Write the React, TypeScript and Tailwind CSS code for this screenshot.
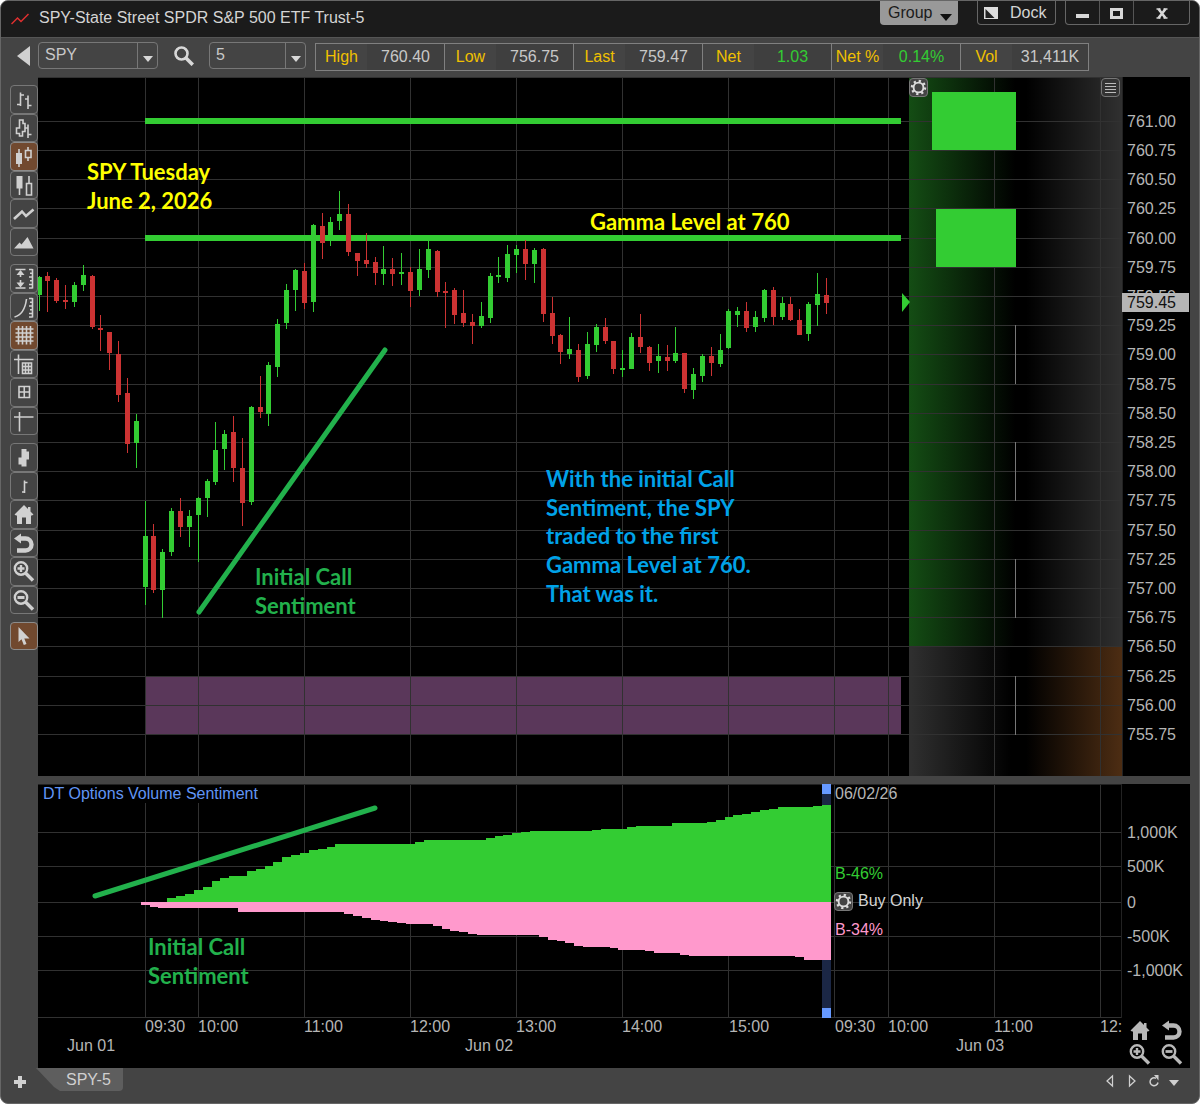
import type { ReactNode } from 'react';

type Candle = ['u' | 'd', number, number, number, number];

// direction, high, body top, body bottom, low
const CANDLES: Candle[] = [
  ['u', 276, 277, 295, 311], ['d', 272, 276, 281, 312], ['d', 278, 280, 301, 303], ['d', 285, 300, 302, 309],
  ['u', 282, 285, 302, 307], ['u', 265, 275, 285, 291], ['d', 275, 276, 327, 329], ['d', 315, 328, 330, 351],
  ['d', 332, 332, 353, 370], ['d', 341, 354, 395, 402], ['d', 378, 393, 444, 453], ['u', 414, 421, 443, 468],
  ['u', 501, 536, 587, 605], ['d', 524, 536, 590, 593], ['u', 549, 552, 590, 618], ['u', 508, 511, 552, 556],
  ['d', 498, 511, 527, 537], ['u', 510, 516, 527, 547], ['u', 497, 498, 515, 562], ['u', 479, 481, 498, 517],
  ['u', 422, 450, 482, 485], ['u', 430, 434, 449, 470], ['d', 416, 432, 468, 482], ['d', 438, 468, 503, 526],
  ['u', 406, 407, 502, 505], ['d', 376, 407, 412, 418], ['u', 362, 365, 414, 426], ['u', 319, 324, 367, 377],
  ['u', 284, 290, 323, 329], ['u', 269, 270, 290, 311], ['d', 263, 271, 303, 309], ['u', 224, 225, 302, 312],
  ['d', 213, 226, 243, 259], ['u', 217, 222, 237, 246], ['u', 191, 214, 221, 230], ['d', 204, 214, 252, 256],
  ['d', 253, 253, 261, 276], ['d', 233, 260, 264, 268], ['d', 257, 262, 273, 285], ['u', 246, 269, 274, 285],
  ['d', 258, 269, 274, 286], ['u', 253, 272, 274, 285], ['d', 267, 272, 291, 307], ['u', 249, 269, 290, 296],
  ['u', 240, 249, 270, 278], ['d', 250, 251, 292, 297], ['d', 282, 291, 293, 328], ['d', 288, 290, 315, 324],
  ['d', 290, 313, 323, 327], ['d', 314, 322, 326, 344], ['u', 302, 316, 326, 328], ['u', 273, 276, 318, 323],
  ['u', 257, 275, 277, 283], ['u', 245, 254, 278, 282], ['u', 245, 249, 255, 273], ['d', 240, 249, 264, 280],
  ['u', 248, 250, 264, 283], ['d', 248, 249, 314, 322], ['d', 297, 313, 336, 344], ['d', 334, 335, 352, 364],
  ['u', 317, 349, 354, 359], ['d', 344, 350, 377, 382], ['u', 332, 344, 376, 379], ['u', 324, 327, 345, 352],
  ['d', 318, 327, 341, 344], ['d', 341, 341, 369, 374], ['u', 350, 368, 370, 377], ['u', 333, 337, 369, 369],
  ['d', 314, 337, 347, 353], ['d', 346, 347, 363, 371], ['u', 344, 356, 361, 373], ['d', 345, 357, 361, 371],
  ['u', 327, 353, 361, 363], ['d', 353, 353, 389, 393], ['u', 368, 374, 390, 399], ['u', 354, 356, 376, 382],
  ['d', 347, 356, 363, 376], ['u', 334, 350, 364, 367], ['u', 309, 311, 348, 349], ['u', 307, 311, 315, 327],
  ['d', 302, 311, 328, 332], ['u', 311, 317, 327, 332], ['u', 289, 290, 318, 322], ['d', 287, 290, 317, 325],
  ['u', 297, 303, 317, 320], ['d', 297, 304, 320, 321], ['d', 309, 320, 335, 335], ['u', 302, 304, 334, 341],
  ['u', 273, 294, 305, 326], ['d', 278, 295, 303, 314],
];

// [number of bars, edge of the bar]
const CALLS = [
  [3, 902], [1, 898], [1, 896], [1, 894], [1, 890], [1, 887], [1, 881], [1, 878], [2, 876], [1, 871], [1, 869],
  [1, 866], [1, 862], [1, 857], [1, 855], [1, 853], [1, 850], [1, 849], [1, 847], [9, 844], [1, 842], [7, 840],
  [1, 838], [1, 836], [1, 835], [1, 833], [1, 832], [7, 831], [1, 830], [3, 829], [1, 827], [4, 826], [4, 823],
  [1, 822], [1, 820], [1, 817], [1, 815], [1, 814], [1, 812], [1, 810], [1, 809], [4, 807], [1, 806], [1, 805],
];
const PUTS = [
  [1, 905], [1, 907], [9, 908], [12, 912], [1, 914], [1, 916], [1, 918], [1, 920], [1, 921], [1, 922], [1, 923],
  [3, 924], [1, 926], [1, 929], [1, 931], [1, 932], [1, 934], [7, 935], [1, 937], [1, 940], [1, 941], [1, 943],
  [1, 946], [3, 947], [1, 948], [3, 950], [1, 951], [3, 953], [1, 955], [12, 956], [1, 957], [3, 960],
];

const STEP = 8.846;
const HOURS = [145, 198, 304, 410, 516, 622, 728, 834, 888, 994, 1100];
const PRICES = Array.from({ length: 22 }, (_, i) => 761 - i * 0.25);
const priceY = (p: number) => Math.round(120.8 + (761 - p) * 116.8);

const TIMES: [number, string][] = [
  [145, '09:30'], [198, '10:00'], [304, '11:00'], [410, '12:00'], [516, '13:00'], [622, '14:00'], [729, '15:00'],
  [835, '09:30'], [888, '10:00'], [994, '11:00'], [1100, '12:'],
];
const DAYS: [number, string][] = [[67, 'Jun 01'], [465, 'Jun 02'], [956, 'Jun 03']];
const VOLUMES: [number, string][] = [[832, '1,000K'], [866, '500K'], [902, '0'], [936, '-500K'], [970, '-1,000K']];

const QUOTES = [
  { label: 'High', value: '760.40', color: 'text-[#c8c8c8]' },
  { label: 'Low', value: '756.75', color: 'text-[#c8c8c8]' },
  { label: 'Last', value: '759.47', color: 'text-[#c8c8c8]' },
  { label: 'Net', value: '1.03', color: 'text-[#33cc33]' },
  { label: 'Net %', value: '0.14%', color: 'text-[#33cc33]' },
  { label: 'Vol', value: '31,411K', color: 'text-[#c8c8c8]' },
];

function areaPath(runs: number[][]) {
  let x = 140.7;
  let d = `M${x} 902`;
  runs.forEach(([count, y]) => {
    d += `V${y}`;
    x += count * STEP;
    d += `H${x.toFixed(1)}`;
  });
  return d + 'V902Z';
}

const fill = { fill: 'currentColor', stroke: 'none' };

const HomeShape = (
  <path {...fill} d="M14 5 4.5 14.5 6 15.5H7V24H12V17.500H16V24H21V15.500H22L23.500 14.500 20.500 11.500V7H18V9Z" />
);
const UndoShape = (
  <>
    <path d="M9 9.500H15.500A6 6 0 0 1 15.500 21.500H7" strokeWidth="4.400" />
    <path {...fill} d="M4 9.500 11 4.500V14.500Z" />
  </>
);
const ZoomInShape = (
  <>
    <circle cx="11" cy="11.500" r="6.200" strokeWidth="2.400" />
    <path d="M7.500 11.500H14.500M11 8V15" strokeWidth="2.400" />
    <path d="M15.500 16 23 23.500" strokeWidth="3.400" />
  </>
);
const ZoomOutShape = (
  <>
    <circle cx="11" cy="11.500" r="6.200" strokeWidth="2.400" />
    <path d="M7.500 11.500H14.500" strokeWidth="2.800" />
    <path d="M15.500 16 23 23.500" strokeWidth="3.400" />
  </>
);
const Ruler = <path d="M22.500 5V24.500M19 5.500H22.500M20 9.300H22.500M19 13H22.500M20 16.700H22.500M19 20.500H22.500M19 24H22.500" />;

type Tool = { name: string; icon: ReactNode; active?: boolean };

const TOOL_GROUPS: Tool[][] = [
  [
    { name: 'OHLC bars', icon: <path d="M10.500 7.500V21M7 19.500H10.500M10.500 10H14M18 10.500V24M15 14H18M18 20.500H21.500" /> },
    {
      name: 'HLC bars',
      icon: <path d="M9.500 6H13V9.500H15V17.500H12.500V22H9.500V19.500H6.500V14H9.500ZM18 10.500V24M15 14H18M18 20.500H21.500" />,
    },
    {
      name: 'Candlesticks',
      active: true,
      icon: (
        <>
          <path {...fill} d="M6 11H12V22H6Z" />
          <path d="M9 7V25M18 5V8.500M18 15.500V19M15.500 8.500H21V15.500H15.500Z" />
        </>
      ),
    },
    {
      name: 'Hollow bars',
      icon: (
        <>
          <path {...fill} d="M6.500 5H12.500V17.500H6.500Z" />
          <path d="M9.500 17V24M19 5V12.500M16.500 12.500H21.500V24H16.500Z" />
        </>
      ),
    },
    { name: 'Line', icon: <path d="M4 20 12 12.500 16 17 23.500 10.500" strokeWidth="2.600" /> },
    { name: 'Area', icon: <path {...fill} d="M4 20.500 9.500 14.500 11.500 16.500 17.500 9 23.500 20.500Z" /> },
  ],
  [
    {
      name: 'Fit height',
      icon: (
        <>
          <path d="M5.500 5.500H15.500M5.500 24H15.500M10.500 8V13M10.500 16V21" />
          <path {...fill} d="M10.500 6 14.500 11H6.500ZM10.500 23.500 14.500 18.500H6.500Z" />
          {Ruler}
        </>
      ),
    },
    { name: 'Log scale', icon: <><path d="M4.500 24Q14.500 21.500 16.500 6" />{Ruler}</> },
    {
      name: 'Grid',
      active: true,
      icon: <path d="M8.500 5V23.500M12.500 5V23.500M16.500 5V23.500M20.500 5V23.500M5.500 8H23.500M5.500 12H23.500M5.500 16H23.500M5.500 20H23.500" />,
    },
    {
      name: 'Data table',
      icon: <path d="M8.500 4.500V24M4 9.500H23.500M12.500 13H21.500V23.500H12.500ZM12.500 16.500H21.500M12.500 20H21.500M15.500 13V23.500M18.500 13V23.500" />,
    },
    { name: 'Table', icon: <path d="M9 8.500H19.500V19.500H9ZM9 14H19.500M14.250 8.500V19.500" /> },
    { name: 'Crosshair', icon: <path d="M9.500 5V24.500M4 10H23.500" /> },
  ],
  [
    { name: 'Wide bars', icon: <path {...fill} d="M11.500 6H16.500V8.500H19V16.500H16.500V23.500H11.500V21.500H8.500V14.500H11.500Z" /> },
    { name: 'Narrow bars', icon: <path d="M14.500 8.500V21M12 20H14.500M14.500 10.500H17.500" /> },
    { name: 'Home', icon: HomeShape },
    { name: 'Undo', icon: UndoShape },
    { name: 'Zoom in', icon: ZoomInShape },
    { name: 'Zoom out', icon: ZoomOutShape },
  ],
];

function Icon({ children, className = 'size-7' }: { children: ReactNode; className?: string }) {
  return (
    <svg viewBox="0 0 28 28" className={className} fill="none" stroke="currentColor" strokeWidth="1.6" aria-hidden="true">
      {children}
    </svg>
  );
}

function ToolButton({ name, icon, active }: Tool) {
  return (
    <button
      type="button"
      aria-label={name}
      aria-pressed={!!active}
      className={`flex min-h-0 w-7 flex-1 items-center justify-center overflow-hidden rounded border text-[#d0d0d0] ${
        active ? 'border-[#8c8c8c] bg-[#71492f]' : 'border-[#777] bg-[#444]'
      }`}
    >
      <Icon className="size-7 shrink-0">{icon}</Icon>
    </button>
  );
}

function GearButton({ label }: { label: string }) {
  return (
    <button type="button" aria-label={label} className="flex size-[19px] items-center justify-center rounded border border-[#777] bg-[#444]">
      <svg viewBox="0 0 18 18" className="size-[17px]" aria-hidden="true">
        <circle cx="9" cy="9" r="7" fill="none" stroke="#ddd" strokeWidth="2.400" strokeDasharray="2.400 3.098" />
        <circle cx="9" cy="9" r="5.200" fill="none" stroke="#ddd" strokeWidth="2" />
      </svg>
    </button>
  );
}

function Picker({ label, value, className }: { label: string; value: string; className: string }) {
  return (
    <div className={`relative h-[27px] rounded border border-[#777] ${className}`}>
      <select
        aria-label={label}
        defaultValue={value}
        className="block h-6 w-full appearance-none bg-transparent pl-1.5 text-base leading-6 text-[#c8c8c8] outline-none"
      >
        <option>{value}</option>
      </select>
      <span className="pointer-events-none absolute inset-y-0 right-0 flex w-5 items-center justify-center border-l border-[#777] pt-1.5">
        <svg viewBox="0 0 10 6" className="h-1.5 w-2.5" aria-hidden="true">
          <path d="M0 0H10L5 6Z" fill="#d8d8d8" />
        </svg>
      </span>
    </div>
  );
}

function TitleBar() {
  return (
    <header className="flex h-9 items-start bg-[#1b1b1b] pr-[9px] pl-2.5">
      <svg viewBox="0 0 18 12" className="mt-3 h-3 w-[18px]" fill="none" stroke="#e03030" strokeWidth="1.5" aria-hidden="true">
        <path d="M.5 11 6.500 5 10 8.500 17.500 1" />
      </svg>
      <h1 className="mt-[5px] ml-2.5 flex-1 truncate text-base leading-6 text-[#d4d4d4]">SPY-State Street SPDR S&amp;P 500 ETF Trust-5</h1>
      <button type="button" className="flex h-6 w-[78px] items-center justify-between rounded-b bg-[#999] pr-1.5 pl-2 text-base text-[#1b1b1b]">
        Group
        <svg viewBox="0 0 12 7" className="mt-2 h-[7px] w-3" aria-hidden="true">
          <path d="M0 0H12L6 7Z" fill="#111" />
        </svg>
      </button>
      <button type="button" className="ml-[19px] flex h-6 w-[79px] items-center gap-3 rounded-b border border-t-0 border-[#666] pl-1.5 text-base text-[#d4d4d4]">
        <svg viewBox="0 0 14 12" className="h-3 w-3.5" aria-hidden="true">
          <path d="M0 0H14V12H0Z" fill="#ddd" />
          <path d="M1.500 2V11H10.500Z" fill="#222" />
        </svg>
        Dock
      </button>
      <div className="ml-[9px] flex h-6 w-[125px] divide-x divide-[#555] rounded-b border border-t-0 border-[#666] text-[#d8d8d8]">
        <button type="button" aria-label="Minimize" className="flex w-[34px] items-center justify-center pt-1.5">
          <span className="h-1 w-[13px] bg-[#d8d8d8]" />
        </button>
        <button type="button" aria-label="Maximize" className="flex w-[34px] items-center justify-center pt-0.5">
          <span className="h-[11px] w-[13px] border-3 border-[#d8d8d8]" />
        </button>
        <button type="button" aria-label="Close" className="flex flex-1 items-center justify-center pt-0.5">
          <svg viewBox="0 0 12 11" className="h-[11px] w-3" fill="none" stroke="currentColor" aria-hidden="true">
            <path d="M2.500 1 9.500 10M9.500 1 2.500 10" strokeWidth="2.600" />
            <path d="M.5 1H4.500M7.500 1H11.500M.5 10H4.500M7.500 10H11.500" strokeWidth="1.600" />
          </svg>
        </button>
      </div>
    </header>
  );
}

function Toolbar() {
  return (
    <div className="flex h-10 items-start border-t border-[#555] pt-1 pl-4">
      <button type="button" aria-label="Back" className="mt-1 h-5 w-[13px]">
        <svg viewBox="0 0 13 20" className="h-5 w-[13px]" aria-hidden="true">
          <path d="M13 0V20L0 10Z" fill="#d0d0d0" />
        </svg>
      </button>
      <Picker label="Symbol" value="SPY" className="ml-2 w-[120px]" />
      <button type="button" aria-label="Search" className="mt-1 ml-4 text-[#d8d8d8]">
        <svg viewBox="0 0 20 20" className="size-5" fill="none" stroke="currentColor" aria-hidden="true">
          <circle cx="7.500" cy="7.500" r="6" strokeWidth="2.600" />
          <path d="M12 12 18.800 18.800" strokeWidth="3.600" />
        </svg>
      </button>
      <Picker label="Interval" value="5" className="ml-[15px] w-[97px]" />
      <dl className="mt-px ml-[9px] flex h-7 divide-x divide-[#808080] border border-[#808080]">
        {QUOTES.map((q) => (
          <div key={q.label} className="flex w-[129px] text-base leading-[26px] last:w-[127px]">
            <dt className="w-[51px] text-center whitespace-nowrap text-[#f0c000]">{q.label}</dt>
            <dd className={`flex-1 bg-[#3f3f3f] text-center ${q.color}`}>{q.value}</dd>
          </div>
        ))}
      </dl>
    </div>
  );
}

function Note({ x, y, lines, color }: { x: number; y: number; lines: string[]; color: string }) {
  return (
    <text fill={color} className="font-['Lato',sans-serif] text-[22px] font-bold">
      {lines.map((line, i) => (
        <tspan key={line} x={x} y={Math.round(y + i * 28.7)}>
          {line}
        </tspan>
      ))}
    </text>
  );
}

function PriceChart() {
  return (
    <svg viewBox="38 77 1152 699" className="block h-auto w-full bg-black" role="img" aria-label="SPY 5 minute candles">
      <defs>
        <linearGradient id="callSide">
          <stop offset="0" stopColor="#144d14" />
          <stop offset="0.5" stopColor="#000" />
          <stop offset="0.55" stopColor="#000" />
          <stop offset="1" stopColor="#303030" />
        </linearGradient>
        <linearGradient id="putSide">
          <stop offset="0" stopColor="#303030" />
          <stop offset="0.48" stopColor="#000" />
          <stop offset="0.55" stopColor="#000" />
          <stop offset="1" stopColor="#4d2d13" />
        </linearGradient>
      </defs>
      <g shapeRendering="crispEdges">
        <rect x="909" y="77" width="213" height="570" fill="url(#callSide)" />
        <rect x="909" y="647" width="213" height="129" fill="url(#putSide)" />
        <rect x="145" y="676" width="756" height="59" fill="#5a375a" />
        {PRICES.map((p) => (
          <rect key={p} x="38" y={priceY(p)} width="1084" height="1" fill="#313131" />
        ))}
        {HOURS.map((x) => (
          <rect key={x} x={x} y="77" width="1" height="699" fill="#313131" />
        ))}
        <rect x="38" y="77" width="1084" height="1" fill="#313131" />
        <rect x="1122" y="77" width="1" height="699" fill="#222" />
        {[325, 442, 559, 676].map((y) => (
          <rect key={y} x="1015" y={y} width="1" height="59" fill="#777" />
        ))}
        <g fill="#33cc33">
          <rect x="932" y="92" width="84" height="58" />
          <rect x="936" y="209" width="80" height="58" />
          <rect x="145" y="118" width="756" height="6" />
          <rect x="145" y="235" width="756" height="6" />
        </g>
        {CANDLES.map(([dir, high, top, bottom, low], i) => {
          const x = Math.round(38.5 + i * STEP);
          return (
            <g key={i} fill={dir === 'u' ? '#33cc33' : '#cc3333'}>
              <rect x={x} y={high} width="1" height={low - high} />
              <rect x={x - 2} y={top} width="5" height={bottom - top} />
            </g>
          );
        })}
      </g>
      <path d="M902 293V312L910 302Z" fill="#33cc33" />
      <path d="M199 612 385 350" stroke="#22b14c" strokeWidth="5" strokeLinecap="round" />

      <Note x={87} y={180} lines={['SPY Tuesday', 'June 2, 2026']} color="#ffff00" />
      <Note x={590} y={230} lines={['Gamma Level at 760']} color="#ffff00" />
      <Note x={255} y={585} lines={['Initial Call', 'Sentiment']} color="#22b14c" />
      <Note
        x={546}
        y={487}
        lines={['With the initial Call', 'Sentiment, the SPY', 'traded to the first', 'Gamma Level at 760.', 'That was it.']}
        color="#00a2e8"
      />

      <g fill="#b5b5b5" className="text-base">
        {PRICES.map((p) => (
          <text key={p} x="1127" y={priceY(p) + 6}>
            {p.toFixed(2)}
          </text>
        ))}
      </g>
      <rect x="1122" y="293" width="67" height="19" fill="#b5b5b5" />
      <text x="1127" y="308" fill="#111" className="text-base">
        759.45
      </text>

      <foreignObject x="909" y="78" width="20" height="20">
        <GearButton label="Profile settings" />
      </foreignObject>
      <foreignObject x="1101" y="78" width="20" height="20">
        <button type="button" aria-label="Profile menu" className="flex size-[19px] flex-col items-center justify-center gap-0.5 rounded border border-[#777] bg-[#333]">
          <span className="h-px w-[11px] bg-[#bbb]" />
          <span className="h-px w-[11px] bg-[#bbb]" />
          <span className="h-px w-[11px] bg-[#bbb]" />
          <span className="h-px w-[11px] bg-[#bbb]" />
        </button>
      </foreignObject>
    </svg>
  );
}

function SentimentChart() {
  return (
    <svg viewBox="38 784 1152 284" className="block h-auto w-full bg-black" role="img" aria-label="DT Options Volume Sentiment">
      <g shapeRendering="crispEdges">
        {VOLUMES.map(([y]) => (
          <rect key={y} x="38" y={y} width="1084" height="1" fill="#313131" />
        ))}
        {HOURS.map((x) => (
          <rect key={x} x={x} y="784" width="1" height="234" fill="#313131" />
        ))}
        <rect x="38" y="784" width="1084" height="1" fill="#222" />
        <rect x="38" y="1017" width="1084" height="1" fill="#313131" />
        <rect x="1121" y="784" width="1" height="234" fill="#222" />
        <rect x="38" y="785" width="222" height="18" fill="#000" />
        <rect x="822" y="784" width="9" height="234" fill="#1b2745" />
        <rect x="822" y="784" width="9" height="10" fill="#6699ff" />
        <rect x="822" y="1008" width="9" height="10" fill="#6699ff" />
        <path d={areaPath(CALLS)} fill="#33cc33" />
        <path d={areaPath(PUTS)} fill="#ff99cc" />
      </g>
      <path d="M95 896 375 808" stroke="#22b14c" strokeWidth="5" strokeLinecap="round" />
      <Note x={148} y={955} lines={['Initial Call', 'Sentiment']} color="#22b14c" />

      <g fill="#b5b5b5" className="text-base">
        <text x="43" y="799" fill="#6095f5">DT Options Volume Sentiment</text>
        <text x="835" y="799">06/02/26</text>
        <text x="835" y="879" fill="#33cc33">B-46%</text>
        <text x="858" y="906" fill="#d4d4d4">Buy Only</text>
        <text x="835" y="935" fill="#ff99cc">B-34%</text>
        {VOLUMES.map(([y, label]) => (
          <text key={label} x="1127" y={y + 6}>{label}</text>
        ))}
        {TIMES.map(([x, label]) => (
          <text key={x} x={x} y="1032">{label}</text>
        ))}
        {DAYS.map(([x, label]) => (
          <text key={label} x={x} y="1051">{label}</text>
        ))}
      </g>

      <foreignObject x="834" y="892" width="20" height="20">
        <GearButton label="Sentiment settings" />
      </foreignObject>
      <foreignObject x="1126" y="1016" width="60" height="52">
        <div className="grid grid-cols-2 gap-x-1 text-[#b8b8b8]">
          <button type="button" aria-label="Home" className="h-6"><Icon>{HomeShape}</Icon></button>
          <button type="button" aria-label="Undo" className="h-6"><Icon>{UndoShape}</Icon></button>
          <button type="button" aria-label="Zoom in" className="h-6"><Icon>{ZoomInShape}</Icon></button>
          <button type="button" aria-label="Zoom out" className="h-6"><Icon>{ZoomOutShape}</Icon></button>
        </div>
      </foreignObject>
    </svg>
  );
}

function TabBar() {
  return (
    <footer className="flex h-[35px] items-start pr-5 pl-[13px] text-[#d0d0d0]">
      <button type="button" aria-label="Add tab" className="mt-2">
        <svg viewBox="0 0 12 12" className="size-3" fill="none" stroke="currentColor" strokeWidth="4" aria-hidden="true">
          <path d="M6 0V12M0 6H12" />
        </svg>
      </button>
      <button
        type="button"
        className="ml-2.5 h-[23px] w-[87px] rounded-br bg-[#5e5e5e] pl-[30px] text-left text-base leading-[23px] [clip-path:polygon(0_0,100%_0,100%_100%,24px_100%,18px_19px)]"
      >
        SPY-5
      </button>
      <div className="mt-1.5 ml-auto flex items-center gap-2">
        <button type="button" aria-label="Previous">
          <Icon className="size-3.5"><path d="M19 4V24L8 14Z" strokeWidth="2.500" /></Icon>
        </button>
        <button type="button" aria-label="Next">
          <Icon className="size-3.5"><path d="M9 4V24L20 14Z" strokeWidth="2.500" /></Icon>
        </button>
        <button type="button" aria-label="Reload">
          <Icon className="size-3.5">
            <path d="M18 8.500A8 8 0 1 0 22 17" strokeWidth="3" />
            <path {...fill} d="M14 2H23V13Z" />
          </Icon>
        </button>
        <button type="button" aria-label="More tabs">
          <svg viewBox="0 0 10 6" className="mt-1 h-1.5 w-2.5" aria-hidden="true"><path d="M0 0H10L5 6Z" fill="currentColor" /></svg>
        </button>
      </div>
    </footer>
  );
}

export default function App() {
  return (
    <div className="flex min-h-screen flex-col overflow-hidden rounded-lg border border-[#666] bg-[#444] font-['Liberation_Sans',Arial,sans-serif]">
      <TitleBar />
      <Toolbar />

      <main className="flex flex-1 pr-[9px]">
        {/* Chart tools */}
        <nav aria-label="Chart tools" className="flex w-[37px] shrink-0 flex-col items-end gap-2 pt-2">
          {TOOL_GROUPS.map((group, i) => (
            <div key={i} className="flex h-[171px] flex-col">
              {group.map((tool) => (
                <ToolButton key={tool.name} {...tool} />
              ))}
            </div>
          ))}
          <div className="flex h-7 flex-col">
            <ToolButton name="Pointer" active icon={<path {...fill} d="M8.500 5V20L11.500 17.200 13.800 23 16.500 22 14.300 16.500H19.500Z" />} />
          </div>
        </nav>

        {/* Charts */}
        <div className="flex min-w-0 flex-1 flex-col gap-2">
          <PriceChart />
          <SentimentChart />
        </div>
      </main>

      <TabBar />
    </div>
  );
}
